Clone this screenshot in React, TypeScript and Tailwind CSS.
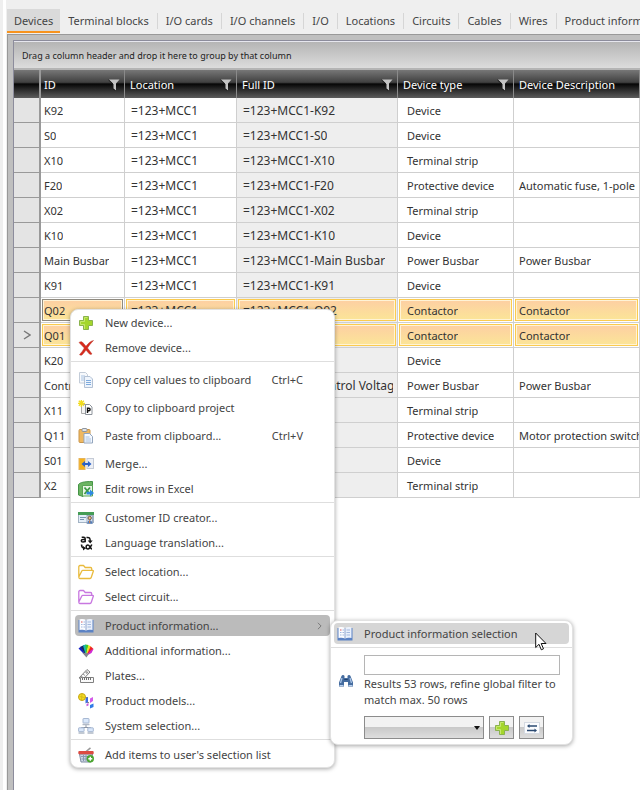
import { useState } from "react";
import type { ReactNode } from "react";
import clsx from "clsx";

const tabs = [
  "Devices",
  "Terminal blocks",
  "I/O cards",
  "I/O channels",
  "I/O",
  "Locations",
  "Circuits",
  "Cables",
  "Wires",
  "Product information",
];

const columns = [
  { label: "ID", filter: true, pad: "pl-[3px]" },
  { label: "Location", filter: true, pad: "pl-[5px]" },
  { label: "Full ID", filter: true, pad: "pl-[5px]" },
  { label: "Device type", filter: true, pad: "pl-[5px]" },
  { label: "Device Description", filter: false, pad: "pl-[5px]" },
];

const devices = [
  { id: "K92", type: "Device", description: "" },
  { id: "S0", type: "Device", description: "" },
  { id: "X10", type: "Terminal strip", description: "" },
  { id: "F20", type: "Protective device", description: "Automatic fuse, 1-pole" },
  { id: "X02", type: "Terminal strip", description: "" },
  { id: "K10", type: "Device", description: "" },
  { id: "Main Busbar", type: "Power Busbar", description: "Power Busbar" },
  { id: "K91", type: "Device", description: "" },
  { id: "Q02", type: "Contactor", description: "Contactor", selected: true, focused: true },
  { id: "Q01", type: "Contactor", description: "Contactor", selected: true, current: true },
  { id: "K20", type: "Device", description: "" },
  { id: "Control Voltage", type: "Power Busbar", description: "Power Busbar" },
  { id: "X11", type: "Terminal strip", description: "" },
  { id: "Q11", type: "Protective device", description: "Motor protection switch" },
  { id: "S01", type: "Device", description: "" },
  { id: "X2", type: "Terminal strip", description: "" },
];

const Svg = ({ children }: { children: ReactNode }) => (
  <svg viewBox="0 0 16 16" className="size-4 shrink-0" aria-hidden="true">
    {children}
  </svg>
);

const PlusIcon = () => (
  <Svg>
    <path d="M5.500 1.500h5v4h4v5h-4v4h-5v-4h-4v-5h4z" fill="#a4d62c" stroke="#8ab24e" />
    <path d="M6.500 14V9.500H2.500v-3h4v-4h3" fill="none" stroke="#c6e86e" />
  </Svg>
);

const RemoveIcon = () => (
  <Svg>
    <path d="M1 2.500C2.500 1.300 4 1.300 5 2.800L8 6.300C10 3.500 12.500 1 15.500.5 13 3 11 5.500 9.500 8c1.500 2 3 4 4.500 6-1.500.8-2.500.3-3.500-1L8 10c-1.500 2-2.500 3.500-4 5-1 .3-2 .2-2.500-.3C3.500 12.500 5 10.500 6.300 8z" fill="#d8291c" stroke="#b93a2c" strokeWidth=".5" />
  </Svg>
);

const CopyIcon = () => (
  <Svg>
    <path d="M1.500.5h6l2 2V11h-8z" fill="#f7f9fc" stroke="#c3ccd8" />
    <path d="M3 4h4M3 6h3M3 8h3" stroke="#a9c3e2" />
    <path d="M6.500 4.500h5.500l2.500 2.500v8.500h-8z" fill="#eef4fc" stroke="#b3c1d4" />
    <path d="M8 8.500h5M8 10.500h5M8 12.500h5" stroke="#7fabdd" />
  </Svg>
);

const CopyProjectIcon = () => (
  <Svg>
    <path d="M3.500 4.500H8v9H3.500z" fill="#f4f4f4" stroke="#aaa" />
    <path d="M7.500 4.500h4l2.500 2.500v7.500H7.500z" fill="#fff" stroke="#8d939b" />
    <path d="M9.500 13V8.200h1.300a1.300 1.300 0 0 1 0 2.600H9.500" fill="none" stroke="#111" strokeWidth="1.400" />
    <path d="M3.300 0v7M0 3.300h7M.8.8l5 5M5.800.8l-5 5" stroke="#f2dc1e" strokeWidth="1.300" />
  </Svg>
);

const PasteIcon = () => (
  <Svg>
    <rect x="1" y="1.500" width="11" height="13" rx="1" fill="#efb860" stroke="#c9954a" />
    <rect x="4" y=".5" width="5" height="3" rx="1" fill="#dfe3e8" stroke="#8e959e" />
    <path d="M6 5.500h5.500l3 3v6.500H6z" fill="#f5f9ff" stroke="#93a5bd" />
    <path d="M7.500 9h4M7.500 11h5.500M7.500 13h5.500" stroke="#a8c2e2" />
  </Svg>
);

const MergeIcon = () => (
  <Svg>
    <rect x="1" y="2.500" width="6" height="11" fill="#f6b21b" stroke="#e5b35c" />
    <rect x="9" y="2.500" width="6.500" height="10" fill="#eceff5" stroke="#c5cbd6" />
    <path d="M3.500 8l3.500-3v2h3V5l3.500 3-3.500 3V9H7v2z" fill="#2b62c8" />
  </Svg>
);

const ExcelIcon = () => (
  <Svg>
    <path d="M.5 3.500C2 1.500 6 .5 14.500.5v4H5v11l-4.500-1.500z" fill="#6cb562" stroke="#459347" />
    <path d="M4.500 4.500h10v10.500h-10z" fill="#eaf5e6" stroke="#5aa455" />
    <path d="M6.500 6.500l5 6M12 6.500l-5.500 6.500" stroke="#3d9a44" strokeWidth="1.800" />
    <path d="M8.500 10.800h3.500V8.500l4 3.500-4 3.500v-2H8.500z" fill="#2f8be0" />
  </Svg>
);

const CustomerIcon = () => (
  <Svg>
    <rect x=".5" y="2.500" width="15" height="10" fill="#e4eef8" stroke="#a3b3c4" />
    <rect x="0" y="2" width="16" height="3" fill="#459c56" />
    <path d="M2 7.500h6M2 9.500h4" stroke="#7895b4" />
    <rect x="9" y="5.500" width="5.500" height="8" fill="#dfe7f2" stroke="#8a9bb3" strokeWidth=".8" />
    <circle cx="11.700" cy="8" r="1.700" fill="#e9b583" stroke="#5b4231" strokeWidth=".8" />
    <path d="M9.300 13.500c0-4.500 5-4.500 5 0z" fill="#4f7fc0" />
    <path d="M11.700 10.500v2.500" stroke="#eb7d28" />
  </Svg>
);

const LanguageIcon = () => (
  <Svg>
    <g fill="none" stroke="#161616" strokeWidth="1.500">
      <path d="M3.700 2.200h2c1.200 0 1.500.6 1.500 1.500v3.500M7.200 4.500H5C2.700 4.500 2.700 7 5 7c1.400 0 2.200-.8 2.200-1.500" />
      <path d="M13.800 9.500c-1 2-2 4.500-3.800 4.500-2.500 0-2.500-4 0-4 2 0 2.300 4 4 4" />
      <path d="M8.500 2.500c3-.5 3.700.8 3.700 3.700M3.500 9.500c0 2.500.5 3.500 3 3.700" />
    </g>
    <path d="M9.700 5.500h5l-2.500 3zM5 11l3 2.300L5 15.500z" fill="#161616" />
  </Svg>
);

const FolderIcon = ({ color }: { color: string }) => (
  <Svg>
    <path d="M.8 12.800V2.700c0-.7.5-1.200 1.200-1.200h3.500l1.700 2h5.300c.7 0 1.200.5 1.200 1.200v1.600M.8 13l3-6c.2-.4.6-.7 1-.7h9.900c.5 0 .8.500.6 1l-2 6c-.2.700-.5 1.200-1.300 1.200H1.700c-.6 0-.9-.6-.9-1.500z" fill="none" stroke={color} strokeWidth="1.300" strokeLinejoin="round" />
  </Svg>
);

const BookIcon = () => (
  <Svg>
    <path d="M.5 2h15v12.500H.5z" fill="#5b82c4" />
    <path d="M1.500 1.500C4 .8 6.500 1 8 2v10.500c-2-1-4-1-6.500-.4z" fill="#fbfcff" />
    <path d="M14.500 1.500C12 .8 9.500 1 8 2v10.500c2-1 4-1 6.500-.4z" fill="#eaf0fb" />
    <path d="M8 2v11" stroke="#8ea5ce" />
    <path d="M3 4h1.500" stroke="#d8565a" />
    <path d="M3 6.500h1.500M3 9h1.500M5.500 4h1.500M5.500 6.500h1.500M5.500 9h1.500M9.500 4h3.500M9.500 6.500h3.500M9.500 9h3.500" stroke="#a3b8de" />
  </Svg>
);

const SwatchIcon = () => (
  <Svg>
    <path d="M8 13L.5 5.500 3 3.500z" fill="#1722c9" />
    <path d="M8 13L2.500 3.700 6 2z" fill="#132a66" />
    <path d="M8 13L5 2.300 8 1.500z" fill="#18b6b5" />
    <path d="M8 13L7.500 1.500l3 .6z" fill="#3eca2b" />
    <path d="M8 13L10.300 2 13 3.500z" fill="#f4e11c" />
    <path d="M8 13L12.700 3.300 15.500 6z" fill="#ee2525" />
    <path d="M8 13l5-6 2.500-1-2 4z" fill="#d12ad3" />
    <path d="M4 9.500l7 1L8.500 14.500z" fill="#85858d" />
  </Svg>
);

const PlatesIcon = () => (
  <Svg>
    <g fill="#fafafa" stroke="#808080">
      <path d="M1 10L9 1.500l3 2.500-7 7.500z" />
      <circle cx="8.800" cy="4.500" r=".8" />
      <path d="M2.500 9.500h13v5h-13z" />
    </g>
    <path d="M4.500 9.500v2.500M6.500 9.500V12M8.500 9.500V12M10.500 9.500V12M12.500 9.500V12" stroke="#707070" />
    <path d="M3 8l2 1.500M5 6l2 1.500" stroke="#999" />
  </Svg>
);

const ModelsIcon = () => (
  <Svg>
    <path d="M6 4.500h4M8.500 4.500v5H11" stroke="#888" fill="none" />
    <circle cx="4" cy="4" r="3.500" fill="#f3dc21" stroke="#c6a514" />
    <path d="M1.500 3.500l5 1M4 1l-.5 6" stroke="#cfb018" strokeWidth=".7" />
    <path d="M7.500 5.500L10 4v5L7.500 10.500z" fill="#3f6fe0" />
    <path d="M12 5.500L15 4v4l-3 2z" fill="#d35be8" />
    <path d="M12 12l3.500-1.500v3.500L12 15.500z" fill="#317be6" />
    <path d="M8.500 11l2-1v2.500l-2 .8z" fill="#c95ae0" />
  </Svg>
);

const SystemIcon = () => (
  <Svg>
    <path d="M8 7v2.500M3.500 11V9.500h9V11" fill="none" stroke="#8a94a3" />
    <g fill="#d9e7fa" stroke="#9fb1cd" strokeWidth=".9">
      <rect x="5" y=".5" width="6" height="4.500" rx=".5" />
      <rect x=".6" y="9.800" width="5.500" height="3.800" rx=".5" />
      <rect x="9.800" y="9.800" width="5.500" height="3.800" rx=".5" />
    </g>
    <path d="M4.500 6.500h7M.5 15h6M9.500 15h6" stroke="#b0b9c6" strokeWidth="1.400" />
  </Svg>
);

const BasketIcon = () => (
  <Svg>
    <path d="M7.500 5L12.500.8" stroke="#999" strokeWidth="1.600" />
    <path d="M1.500 7h13l-1.500 8H3z" fill="#cfd8e6" stroke="#7e8ca3" />
    <path d="M3 9.500h10M3.500 12h9M5.500 8v6M8 8v6" stroke="#8a99b3" />
    <rect x=".3" y="4" width="15.400" height="3.300" rx="1" fill="#dc4b41" />
    <circle cx="12.300" cy="11.800" r="3.700" fill="#4aa52f" />
    <path d="M12.300 9.800v4M10.300 11.800h4" stroke="#fff" strokeWidth="1.400" />
  </Svg>
);

const BinocularsIcon = () => (
  <Svg>
    <path d="M3.500 3c.5-1.300 2.500-1.300 3 0v2h3V3c.5-1.300 2.500-1.300 3 0L15 9.500v4h-5V9H6v4.500H1v-4z" fill="#456c9f" />
    <path d="M4 5l-1.500 5M12 5l1.500 5" stroke="#a9c4e6" strokeWidth="1.300" />
    <path d="M6.300 6.500h3.400" stroke="#20406e" />
    <path d="M1.500 12.500h4M10.500 12.500h4" stroke="#b9d0ee" />
  </Svg>
);

const SwapIcon = () => (
  <Svg>
    <rect x=".5" y="2.500" width="15" height="11" fill="#fbfcfe" stroke="#d5dae2" />
    <path d="M5 6h8M3 10.500h8" stroke="#2b4a72" strokeWidth="1.500" />
    <path d="M3 6l2.500-2v4zM13 10.500l-2.500-2v4z" fill="#2b4a72" />
  </Svg>
);

const FilterIcon = () => (
  <svg viewBox="0 0 12 12" className="size-3 shrink-0" aria-hidden="true">
    <path d="M1 .5h10.500L8 4.500V11.500L5 9.500v-5z" fill="#c4c4c4" />
    <path d="M.5 1L5 5v5l2.500 1.500" fill="none" stroke="#1c1c1c" />
  </svg>
);

type MenuEntry = { label: string; icon: ReactNode; shortcut?: string; sub?: boolean; spaced?: boolean };

const menuGroups: MenuEntry[][] = [
  [
    { label: "New device...", icon: <PlusIcon /> },
    { label: "Remove device...", icon: <RemoveIcon /> },
  ],
  [
    { label: "Copy cell values to clipboard", icon: <CopyIcon />, shortcut: "Ctrl+C", spaced: true },
    { label: "Copy to clipboard project", icon: <CopyProjectIcon />, spaced: true },
    { label: "Paste from clipboard...", icon: <PasteIcon />, shortcut: "Ctrl+V", spaced: true },
    { label: "Merge...", icon: <MergeIcon />, spaced: true },
    { label: "Edit rows in Excel", icon: <ExcelIcon /> },
  ],
  [
    { label: "Customer ID creator...", icon: <CustomerIcon /> },
    { label: "Language translation...", icon: <LanguageIcon /> },
  ],
  [
    { label: "Select location...", icon: <FolderIcon color="#e9bb3e" /> },
    { label: "Select circuit...", icon: <FolderIcon color="#c877e0" /> },
  ],
  [
    { label: "Product information...", icon: <BookIcon />, sub: true },
    { label: "Additional information...", icon: <SwatchIcon /> },
    { label: "Plates...", icon: <PlatesIcon /> },
    { label: "Product models...", icon: <ModelsIcon /> },
    { label: "System selection...", icon: <SystemIcon /> },
  ],
  [{ label: "Add items to user's selection list", icon: <BasketIcon /> }],
];

const TabBar = () => {
  const [active, setActive] = useState("Devices");

  return (
    <nav className="flex h-[34px] items-end overflow-hidden bg-[#efefef] pb-px">
      {tabs.map((tab, i) => (
        <button
          key={tab}
          onClick={() => setActive(tab)}
          className={clsx(
            "flex h-6 shrink-0 items-center border-b-2 pt-px whitespace-nowrap",
            tab === active ? "border-[#f7931e] bg-[#dadada] px-[7px]" : "border-transparent"
          )}
        >
          <span className={clsx(tab !== active && "px-2", i > 0 && i < tabs.length - 1 && "border-r border-[#d6d6d6]")}>
            {tab}
          </span>
        </button>
      ))}
    </nav>
  );
};

type CellProps = { children?: ReactNode; pad: string; selected?: boolean; focused?: boolean; shaded?: boolean };

const Cell = ({ children, pad, selected, focused, shaded }: CellProps) => (
  <td
    className={clsx(
      "h-[25px] border-r border-b border-[#cfcfcf]",
      selected ? "p-px" : "p-0",
      shaded && "bg-[#eeeeee]"
    )}
  >
    <div
      className={clsx(
        "flex items-center overflow-hidden pt-px whitespace-nowrap",
        selected
          ? "h-[22px] border bg-linear-to-b from-[#fdcfa3] to-[#fbe597] shadow-[inset_0_0_0_1px_#fff3d6]"
          : "h-6",
        selected && (focused ? "border-[#8f8a80]" : "border-[#fbcb4e]")
      )}
    >
      <span className={clsx("overflow-hidden", pad)}>{children}</span>
    </div>
  </td>
);

const headerFill = "bg-[linear-gradient(#777,#404040_44%,#060606_50%,#222_65%,#5c5c5c)]";

const DeviceGrid = () => (
  <table className="w-full table-fixed border-separate border-spacing-0 bg-white text-[#333]">
    <colgroup>
      <col className="w-[27px]" />
      <col className="w-[84px]" />
      <col className="w-28" />
      <col className="w-[161px]" />
      <col className="w-[116px]" />
      <col />
    </colgroup>
    <thead>
      <tr className="h-7 text-white">
        <th className={clsx("border-r-2 border-[#9a9a9a] p-0", headerFill)} />
        {columns.map((column) => (
          <th key={column.label} className={clsx("border-r border-[#8a8a8a] p-0 font-normal", headerFill)}>
            <div className={clsx("flex items-center justify-between pt-px pr-1 whitespace-nowrap", column.pad)}>
              {column.label}
              {column.filter && <FilterIcon />}
            </div>
          </th>
        ))}
      </tr>
    </thead>
    <tbody>
      {devices.map((device) => (
        <tr key={device.id}>
          <td className="border-r-2 border-b border-[#999] bg-[#e4e4e4] p-0 text-center">
            {device.current && (
              <svg viewBox="0 0 8 10" className="mx-auto h-2.5 w-2" aria-hidden="true">
                <path d="M1 1l6 4-6 4" fill="none" stroke="#777" strokeWidth="1.400" />
              </svg>
            )}
          </td>
          <Cell pad={device.selected ? "pl-px" : "pl-[3px]"} selected={device.selected} focused={device.focused}>
            {device.id}
          </Cell>
          <Cell pad={device.selected ? "pl-[4px] text-xs" : "pl-[6px] text-xs"} selected={device.selected}>
            =123+MCC1
          </Cell>
          <Cell pad={device.selected ? "pl-[4px] text-xs" : "pl-[6px] mr-1 text-xs"} selected={device.selected} shaded>
            =123+MCC1-{device.id}
          </Cell>
          <Cell pad={device.selected ? "pl-[7px]" : "pl-[9px]"} selected={device.selected}>
            {device.type}
          </Cell>
          <Cell pad={device.selected ? "pl-[3px]" : "pl-[5px]"} selected={device.selected}>
            {device.description}
          </Cell>
        </tr>
      ))}
    </tbody>
  </table>
);

const ContextMenu = () => (
  <div
    role="menu"
    className="absolute top-[309px] left-[70px] w-[265px] rounded-lg border border-[#e2e2e2] bg-white text-[#444] shadow-[0_1px_4px_rgba(0,0,0,0.35)]"
  >
    {menuGroups.map((group, i) => (
      <div key={i}>
        {i > 0 && <hr className="mt-px mb-[2px] border-[#dedede]" />}
        {group.map((item) => (
          <div key={item.label} className={clsx("px-1 pb-[2px]", item.spaced ? "pt-[5px]" : "pt-[2px]")}>
            <button
              role="menuitem"
              className={clsx(
                "flex h-[21px] w-full items-center rounded pl-[3px] text-left whitespace-nowrap",
                item.sub ? "bg-[#bbbbbb]" : "hover:bg-[#d8d8d8]"
              )}
            >
              {item.icon}
              <span className="ml-[11px] pt-px">{item.label}</span>
              {item.shortcut && <span className="mr-[27px] ml-auto pt-px">{item.shortcut}</span>}
              {item.sub && (
                <svg viewBox="0 0 6 10" className="mr-2 ml-auto h-2 w-[5px]" aria-hidden="true">
                  <path d="M1 1l4 4-4 4" fill="none" stroke="#777" strokeWidth="1.200" />
                </svg>
              )}
            </button>
          </div>
        ))}
      </div>
    ))}
  </div>
);

const buttonFill = "bg-linear-to-b from-[#f2f2f2] from-50% via-[#c9c9c9] via-50% to-[#dedede]";

const toolButton = clsx("flex h-[23px] w-[25px] items-center justify-center border border-[#8c8c8c]", buttonFill);

const ProductSubmenu = () => (
  <div className="absolute top-[620px] left-[330px] w-[243px] rounded-lg border border-[#e2e2e2] bg-white pb-[5px] text-[#444] shadow-[0_1px_4px_rgba(0,0,0,0.35)]">
    <div className="px-[3px] pt-[2px] pb-[3px]">
      <button className="flex h-[21px] w-full items-center rounded bg-[#d6d6d6] pl-[3px] text-left">
        <BookIcon />
        <span className="ml-[11px] pt-px">Product information selection</span>
      </button>
    </div>
    <hr className="border-[#dedede]" />
    <div className="flex pt-[7px] pr-3 pl-[7px]">
      <label htmlFor="product-search" className="mt-[18px] mr-[10px] shrink-0" aria-label="Search products">
        <BinocularsIcon />
      </label>
      <div className="min-w-0 grow">
        <input
          id="product-search"
          type="text"
          className="block h-5 w-full border border-[#b5b5b5] bg-white px-1 outline-none"
        />
        <p className="mt-px leading-4 whitespace-nowrap">
          Results 53 rows, refine global filter to
          <br />
          match max. 50 rows
        </p>
        <div className="mt-2 flex gap-[5px]">
          <div className="relative w-[120px]">
            <select
              aria-label="Product"
              className={clsx("block h-[23px] w-full appearance-none border border-[#8c8c8c] px-1", buttonFill)}
            />
            <svg
              viewBox="0 0 6 4"
              className="pointer-events-none absolute top-[10px] right-1 h-1 w-1.5"
              aria-hidden="true"
            >
              <path d="M0 0h6L3 4z" fill="#111" />
            </svg>
          </div>
          <button className={toolButton} aria-label="Add product">
            <PlusIcon />
          </button>
          <button className={toolButton} aria-label="Replace product">
            <SwapIcon />
          </button>
        </div>
      </div>
    </div>
  </div>
);

const Cursor = () => (
  <svg
    viewBox="0 0 12 19"
    className="pointer-events-none absolute top-[632px] left-[535px] h-[19px] w-3"
    aria-hidden="true"
  >
    <path d="M.7 1v14.500l3.300-3.200 2.300 5.500 2.200-1-2.300-5.300h4.800z" fill="#fff" stroke="#111" />
  </svg>
);

export default function App() {
  return (
    <div className="relative flex min-h-screen overflow-hidden bg-[#efefef] font-['Noto_Sans','Open_Sans',sans-serif] text-[11px] leading-4 text-[#444]">
      <div className="mr-px ml-[3px] w-[3px] shrink-0 bg-white" />
      <main className="flex min-w-0 grow flex-col">
        <TabBar />
        <div className="flex grow flex-col border-t border-l border-[#999] bg-[#bfbfbf] pt-[5px] pl-[5px]">
          <section className="grow border-t border-l border-[#8c8c9c] bg-white">
            <div className="flex h-[29px] items-center border-t border-b-2 border-t-[#e6e6ee] border-b-[#b4b4b4] bg-linear-to-b from-[#b5b5b5] to-[#dcdcdc] pt-px pl-2 text-[9px] text-[#222]">
              Drag a column header and drop it here to group by that column
            </div>
            <DeviceGrid />
          </section>
        </div>
      </main>
      <ContextMenu />
      <ProductSubmenu />
      <Cursor />
    </div>
  );
}
